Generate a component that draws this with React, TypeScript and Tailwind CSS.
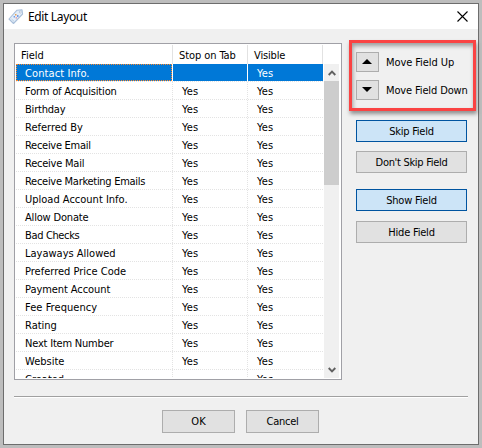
import type { ReactNode } from 'react';

const FIELDS: [string, string, string, string][] = [
  ['Contact Info.', '', 'Yes', 'tracking-[0.1px]'],
  ['Form of Acquisition', 'Yes', 'Yes', 'tracking-[-0.17px]'],
  ['Birthday', 'Yes', 'Yes', 'tracking-[-0.2px]'],
  ['Referred By', 'Yes', 'Yes', 'tracking-normal'],
  ['Receive Email', 'Yes', 'Yes', 'tracking-[-0.28px]'],
  ['Receive Mail', 'Yes', 'Yes', 'tracking-[-0.23px]'],
  ['Receive Marketing Emails', 'Yes', 'Yes', 'tracking-[-0.28px]'],
  ['Upload Account Info.', 'Yes', 'Yes', 'tracking-normal'],
  ['Allow Donate', 'Yes', 'Yes', 'tracking-[-0.18px]'],
  ['Bad Checks', 'Yes', 'Yes', 'tracking-[-0.35px]'],
  ['Layaways Allowed', 'Yes', 'Yes', 'tracking-normal'],
  ['Preferred Price Code', 'Yes', 'Yes', 'tracking-normal'],
  ['Payment Account', 'Yes', 'Yes', 'tracking-[-0.07px]'],
  ['Fee Frequency', 'Yes', 'Yes', 'tracking-[0.06px]'],
  ['Rating', 'Yes', 'Yes', 'tracking-normal'],
  ['Next Item Number', 'Yes', 'Yes', 'tracking-[-0.2px]'],
  ['Website', 'Yes', 'Yes', 'tracking-normal'],
  ['Created', '', 'Yes', 'tracking-normal'],
];

function TagIcon() {
  return (
    <svg className="block h-[16px] w-[16px]" viewBox="0 0 16 16">
      <path d="M9 1.2L14 .8L14.6 5L5.5 14.5L1 10Z" fill="#e3eef9" stroke="#a9bfda" strokeWidth="1.1" strokeLinejoin="round" />
      <circle cx="12.3" cy="3" r="1" fill="#fff" stroke="#9aaecb" strokeWidth=".6" />
      <path d="M7 5h1.5v1.5H7z" fill="#e9a253" />
      <path d="M9 6.3h1.5v1.5H9z" fill="#4e7fe0" />
      <path d="M7.6 8.2h1.4v1.4H7.6z" fill="#e38b9a" />
      <path d="M5.6 7h1.4v1.4H5.6z" fill="#6e9be6" />
      <path d="M3.5 10L6 12.3" stroke="#b9cce3" strokeWidth="1" />
    </svg>
  );
}

function Button({ children, className, active = false }: { children: ReactNode; className: string; active?: boolean }) {
  return (
    <button
      className={`flex shrink-0 items-center justify-center border ${active ? 'border-[#0054a0] bg-[#cce4f7]' : 'border-[#adadad] bg-[#e1e1e1]'} ${className}`}
    >
      {children}
    </button>
  );
}

function Chevron({ down = false }: { down?: boolean }) {
  return (
    <svg className="block h-[6px] w-[8px]" viewBox="0 0 8 6">
      <path d={down ? 'M.7 1L4 4.3L7.3 1' : 'M.7 5L4 1.7L7.3 5'} fill="none" stroke="#606060" strokeWidth="1.9" />
    </svg>
  );
}

function FieldList() {
  return (
    <div className="flex h-[337px] w-[328px] shrink-0 flex-col overflow-hidden border border-[#a0a0a6] bg-white">
      <div className="flex h-[20px] shrink-0 pt-[1px] leading-[21px]">
        <div className="w-[158px] border-r border-[#e2e2e2] pl-[6px]">Field</div>
        <div className="w-[75px] border-r border-[#e2e2e2] pl-[6px] tracking-[-0.08px]">Stop on Tab</div>
        <div className="w-[75px] border-r border-[#e2e2e2] pl-[6px] tracking-[-0.15px]">Visible</div>
      </div>
      <div className="flex min-h-0 flex-1">
        <div className="ml-[1px] h-[314px] w-[307px] overflow-hidden">
          {FIELDS.map(([name, stop, visible, tracking], i) => (
            <div
              key={name}
              className={`flex h-[18px] border-b border-dotted border-[#e3e3e3] leading-[19px] ${i === 0 ? 'text-white' : ''}`}
            >
              <div className={`h-[17px] w-[156px] whitespace-nowrap ${tracking} ${i === 0 ? 'border border-dotted border-[#ff8728] bg-[#0078d7] pl-[8px] leading-[17px]' : 'pl-[9px]'}`}>
                {name}
              </div>
              <div className={`h-[17px] w-[75px] border-l pl-[9px] tracking-[0.2px] ${i === 0 ? 'border-white bg-[#0078d7]' : 'border-dotted border-[#e3e3e3]'}`}>{stop}</div>
              <div className={`h-[17px] w-[76px] border-l pl-[9px] tracking-[0.2px] ${i === 0 ? 'border-white bg-[#0078d7]' : 'border-dotted border-[#e3e3e3]'}`}>{visible}</div>
            </div>
          ))}
        </div>
        <div className="ml-[1px] flex h-[314px] w-[15px] flex-col bg-[#f0f0f0]">
          <div className="flex h-[17px] items-center justify-center"><Chevron /></div>
          <div className="h-[104px] bg-[#cdcdcd]" />
          <div className="flex-1" />
          <div className="flex h-[17px] items-center justify-center"><Chevron down /></div>
        </div>
      </div>
    </div>
  );
}

export default function App() {
  return (
    <div className="h-[448px] w-[482px] overflow-hidden bg-[#bdbdbd] pl-[3px] pt-[3px] font-['DejaVu_Sans_Condensed','DejaVu_Sans',sans-serif] text-[11px] text-black">
      <div className="flex h-[442px] w-[476px] flex-col border border-[#6d6d6d] bg-[#f0f0f0]">
        <div className="flex h-[25px] shrink-0 items-center bg-white pl-[4px] pr-[10px]">
          <TagIcon />
          <div className="ml-[4px] flex-1 font-['Noto_Sans',sans-serif] text-[12px] leading-[24px] tracking-[-0.35px]">Edit Layout</div>
          <svg className="h-[11px] w-[11px]" viewBox="0 0 11 11">
            <path d="M.5.5L10.5 10.5M10.5.5L.5 10.5" stroke="#000" strokeWidth="1.1" />
          </svg>
        </div>
        <div className="flex h-[351px] shrink-0 items-start pl-[10px] pt-[14px]">
          <FieldList />
          <div className="ml-[7px] -mt-[3px] flex w-[127px] flex-col">
            <div className="flex h-[71px] flex-col gap-[8px] border-[3px] border-[#fa4343] pl-[4px] pt-[9px] shadow-[1px_3px_4px_rgba(0,0,0,0.4),inset_1px_3px_4px_rgba(0,0,0,0.35)]">
              <div className="flex h-[20px] items-center gap-[7px] whitespace-nowrap">
                <Button className="h-[20px] w-[23px] pb-[1px] pr-[1px]">
                  <svg className="h-[5px] w-[10px]" viewBox="0 0 10 5"><path d="M0 5L5 0L10 5Z" fill="#000" /></svg>
                </Button>
                <span className="pt-[2px] tracking-[-0.08px]">Move Field Up</span>
              </div>
              <div className="flex h-[20px] items-center gap-[7px] whitespace-nowrap">
                <Button className="h-[20px] w-[23px] pb-[1px] pr-[1px]">
                  <svg className="h-[5px] w-[10px]" viewBox="0 0 10 5"><path d="M0 0L5 5L10 0Z" fill="#000" /></svg>
                </Button>
                <span className="pt-[2px] tracking-[-0.13px]">Move Field Down</span>
              </div>
            </div>
            <div className="flex flex-col pl-[7px] pt-[9px]">
              <Button active className="h-[22px] w-[111px] pt-[3px] tracking-[-0.25px]">Skip Field</Button>
              <Button className="mt-[9px] h-[22px] w-[111px] pt-[3px] tracking-[-0.3px]">Don't Skip Field</Button>
              <Button active className="mt-[16px] h-[22px] w-[111px] pt-[3px] tracking-[-0.2px]">Show Field</Button>
              <Button className="mt-[10px] h-[22px] w-[111px] pt-[3px] tracking-[-0.2px]">Hide Field</Button>
            </div>
          </div>
        </div>
        <div className="ml-[10px] mt-[16px] h-[2px] w-[454px] border-b border-t border-b-white border-t-[#a0a0a0]" />
        <div className="flex gap-[11px] pl-[158px] pt-[12px]">
          <Button className="h-[23px] w-[73px] pt-[2px]">OK</Button>
          <Button className="h-[23px] w-[73px] pt-[2px] tracking-[-0.25px]">Cancel</Button>
        </div>
      </div>
    </div>
  );
}
